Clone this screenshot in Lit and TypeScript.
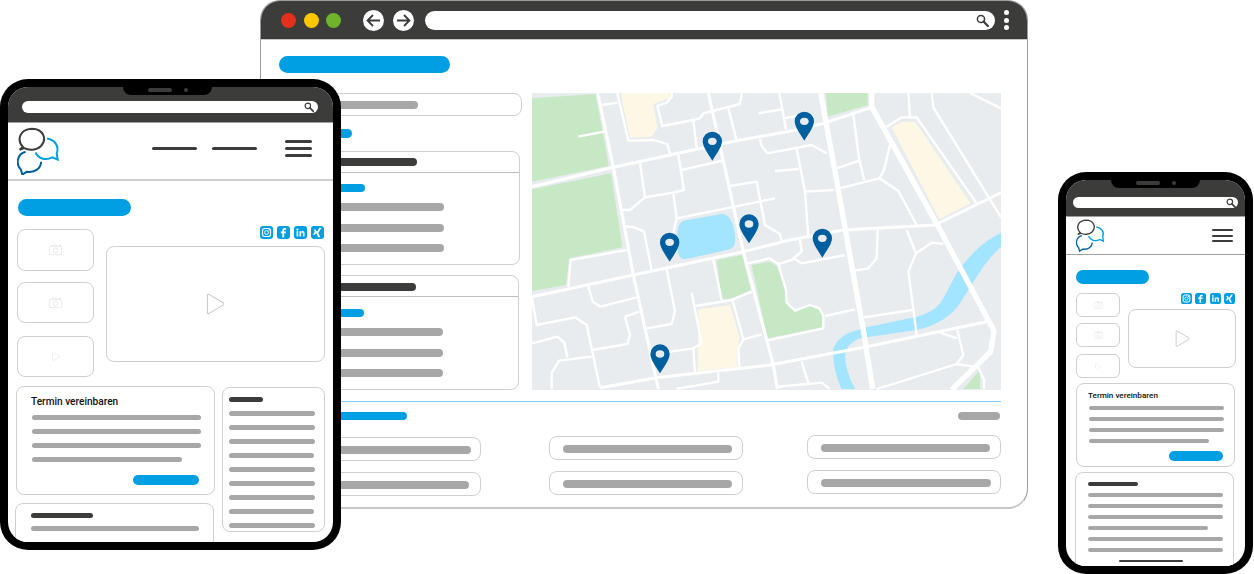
import { LitElement, css, html, svg, type TemplateResult } from "lit";
import { customElement } from "lit/decorators.js";
import { styleMap } from "lit/directives/style-map.js";

// Map geometry is in 3x units, the viewBox scales it back down
const GREEN = [
  "M6 25L197 12L237 228L6 275Z",
  "M6 298L243 250L277 472L118 505L108 585L6 603Z",
  "M888 9L1013 9L1013 45L893 80Z",
  "M560 510L637 495L662 600L605 625L575 628Z",
  "M665 525L720 515L742 530L765 600L768 640L795 665L840 645L868 655L878 675L878 712L712 745Z",
  "M1350 840L1300 897L1350 897Z",
];
const YELLOW = [
  "M272 9L420 9L418 25L370 42L382 115L365 140L300 143Z",
  "M1085 112L1115 95L1155 95L1322 340L1228 388Z",
  "M505 658L600 645L630 745L622 775L622 832L503 843Z",
];
const WATER = [
  "M460 392L575 372Q595 372 605 395Q618 425 615 462Q610 475 590 480L465 508Q445 505 443 480L442 425Q445 400 460 392Z",
  "M1413 428L1375 450Q1320 490 1280 550L1240 625Q1220 665 1160 680L1010 712L985 720Q930 730 910 775Q905 830 935 897L975 897Q945 840 945 795Q950 760 990 745L1010 742L1160 720Q1250 700 1290 640L1340 560Q1370 510 1413 470Z",
];
const ROADS_MAJOR = [
  "M872 9L925 300L962 510L1000 720L1028 897",
  "M1025 9L1025 50L1225 410L1392 722L1382 785L1265 900",
];
const ROADS_MID = [
  "M6 290L250 232L500 178L620 152L800 120L880 100L1025 52",
  "M203 9L250 232L310 555L385 897",
  "M535 9L640 485L730 825L742 897",
  "M6 620L310 555L640 485L780 450L940 420L1215 405L1413 308",
  "M210 893L390 862L720 825L1010 770L1370 695",
];
const ROADS_MINOR = [
  "M215 45L262 38",
  "M262 9L295 152L370 150L412 162L420 190",
  "M425 9L425 20L410 38L382 48L397 108L490 90L510 85L520 70L630 42L635 9",
  "M490 90L500 175",
  "M595 55L620 152",
  "M685 70L755 58",
  "M748 9L768 118",
  "M762 85L800 78",
  "M690 148L695 168L712 190L845 165L890 190",
  "M800 178L825 305L835 440",
  "M735 243L805 237",
  "M145 140L222 125",
  "M330 220L345 322L300 360L275 360",
  "M345 322L430 308L462 300L445 195",
  "M455 240L578 212",
  "M430 310L440 385L428 435",
  "M442 385L735 325",
  "M600 288L680 275L705 405L750 432L755 452",
  "M970 75L988 212L1003 270",
  "M920 235L988 212",
  "M825 305L912 300",
  "M928 295L1048 265L1062 240L1080 165",
  "M1048 265L1105 303L1160 405",
  "M1135 9L1140 80",
  "M1070 110L1115 82L1160 82L1340 340",
  "M1205 9L1210 52L1413 382",
  "M1320 9L1413 55",
  "M1130 420L1158 490L1205 458L1240 462",
  "M1158 490L1135 545L1160 735",
  "M1043 420L1040 505L1015 535L975 542",
  "M810 450L815 485L790 505L815 520L945 495",
  "M655 520L718 505L745 522L790 508",
  "M745 522L768 600L770 638L795 662L840 645L868 655L880 678L880 715L712 752",
  "M885 678L975 658",
  "M1000 682L1148 660",
  "M285 408L312 412L342 425L365 540",
  "M290 480L122 510L115 590",
  "M175 590L188 635L212 650L320 622",
  "M6 625L20 705L135 682L170 705L210 893",
  "M285 680L328 665",
  "M285 680L300 735L292 762L188 780",
  "M350 715L425 702L435 665L410 538",
  "M485 608L515 760L490 775L495 850",
  "M497 648L605 630L665 605",
  "M550 510L575 630",
  "M608 632L640 748L695 733",
  "M640 748L625 775L628 832",
  "M420 785L490 775",
  "M6 760L82 740L103 758L112 802",
  "M65 897L65 848L88 812L185 800",
  "M565 850L565 875L440 897",
  "M815 815L835 880",
  "M745 890L875 878L900 897",
  "M1040 897L1280 822L1300 795L1282 720",
  "M1230 728L1282 745",
  "M1280 822L1345 832L1362 870L1362 897",
];
const PINS = [
  [823, 152],
  [547, 212],
  [657, 460],
  [877, 503],
  [419, 515],
  [390, 850],
];

const shared = css`
  :host,
  * {
    box-sizing: border-box;
  }
  .bar {
    display: block;
    border-radius: 99px;
    flex: none;
  }
  .gray {
    background: #a7a7a7;
  }
  .dark {
    background: #3c3c3b;
  }
  .blue {
    background: #009fe3;
  }
  .box {
    border: 1px solid #cfcfcf;
    background: #fff;
  }
  .url {
    display: flex;
    align-items: center;
    justify-content: flex-end;
    background: #fff;
    border-radius: 99px;
  }
  .notch {
    position: absolute;
    top: 0;
    width: 89px;
    height: 8px;
    display: flex;
    justify-content: center;
    align-items: center;
    gap: 12px;
    background: #000;
    border-radius: 0 0 8px 8px;
    padding-bottom: 2px;
  }
  .speaker {
    width: 24px;
    height: 4px;
    border-radius: 2px;
    background: #3c3c3b;
  }
  .cam {
    width: 4px;
    height: 4px;
    border-radius: 50%;
    background: #3c3c3b;
  }
  .socials {
    display: flex;
    justify-content: flex-end;
  }
  .burger {
    display: flex;
    flex-direction: column;
  }
  .burger i {
    display: block;
    border-radius: 2px;
    background: #3c3c3b;
  }
  .stack {
    display: flex;
    flex-direction: column;
  }
  .thumb,
  .video {
    display: flex;
    align-items: center;
    justify-content: center;
  }
  h4 {
    margin: 0;
    font-family: Roboto, "Liberation Sans", sans-serif;
    font-weight: 500;
    color: #111;
    white-space: nowrap;
  }
  svg {
    display: block;
    flex: none;
  }
`;

function bar(kind: string, width: number, height: number): TemplateResult {
  return html`<span
    class="bar ${kind}"
    style=${styleMap({ width: `${width}px`, height: `${height}px` })}
  ></span>`;
}

function searchIcon(size: number): TemplateResult {
  return html`<svg width=${size} height=${size} viewBox="0 0 12 12" fill="none" stroke="#3c3c3b">
    <circle cx="4.600" cy="4.600" r="3.300" stroke-width="1.400" />
    <path d="M7 7L11 11" stroke-width="2" stroke-linecap="round" />
  </svg>`;
}

function logo(width: number): TemplateResult {
  return html`<svg width=${width} viewBox="50 153 130 148" fill="none" stroke-width="6">
    <path
      d="M141 188C165 192 178 212 170 232L173 252L157 245C135 256 115 248 106 230"
      stroke="#009fe3"
    />
    <path
      d="M76 228C50 235 45 265 62 282L66 297L80 288C105 292 122 278 123 258"
      stroke="#005f9e"
    />
    <path
      d="M68 213C50 195 55 160 95 158C130 158 142 190 122 211C108 224 85 224 72 217L58 222Z"
      stroke="#3c3c3b"
    />
  </svg>`;
}

function camera(width: number): TemplateResult {
  return html`<svg width=${width} viewBox="0 0 14 12" fill="none" stroke="#e2e2e2" stroke-width="0.800">
    <rect x="0.500" y="2.500" width="13" height="9" rx="1.500" />
    <path d="M3 2.500V1.200H8V2.500" />
    <circle cx="7" cy="7" r="2.600" />
    <circle cx="11.500" cy="1.800" r="1" fill="#e2e2e2" stroke="none" />
  </svg>`;
}

function play(width: number, color: string, sw: number): TemplateResult {
  return html`<svg
    width=${width}
    viewBox="0 0 20 23"
    fill="none"
    stroke=${color}
    stroke-width=${sw}
    stroke-linejoin="round"
  >
    <path d="M1.500 2.500Q1.500 0.800 3.200 1.500L18 10.200Q19.500 11.500 18 12.800L3.200 21.500Q1.500 22.200 1.500 20.500Z" />
  </svg>`;
}

function socialIcon(glyph: TemplateResult, size: number): TemplateResult {
  return html`<svg width=${size} height=${size} viewBox="0 0 13 13">
    <rect width="13" height="13" rx="3" fill="#009fe3" />
    ${glyph}
  </svg>`;
}

const SOCIAL_GLYPHS = [
  svg`<g fill="none" stroke="#fff"><rect x="2.500" y="2.500" width="8" height="8" rx="2.200" stroke-width="1.200"/><circle cx="6.500" cy="6.500" r="1.900" stroke-width="1"/></g><circle cx="9" cy="4" r=".7" fill="#fff"/>`,
  svg`<path fill="#fff" d="M7.200 11.500V7.200h1.600l.2-1.800H7.200V4.500c0-.5.200-.8.800-.8h1.100V2.200C8.800 2.100 8.200 2 7.700 2 6.300 2 5.300 2.900 5.300 4.300v1.100H3.800v1.800h1.500v4.300z"/>`,
  svg`<g fill="#fff"><rect x="2.600" y="5.200" width="1.600" height="5.200"/><circle cx="3.400" cy="3.500" r="1"/><path d="M5.500 5.200h1.500v.7c.3-.5.900-.8 1.600-.8 1.400 0 1.900.9 1.900 2.200v3.100H8.900V7.600c0-.6-.2-1.100-.8-1.100s-1 .5-1 1.100v2.800H5.500z"/></g>`,
  svg`<path fill="#fff" d="M2.600 3.600h2l1.300 2.200L4 8.700H2l1.900-2.900zM8.500 1.800h2L7.300 7l2.100 4.200H7.300L5.200 7z"/>`,
];

function socials(size: number, gap: number): TemplateResult {
  return html`<div class="socials" style=${styleMap({ gap: `${gap}px` })}>
    ${SOCIAL_GLYPHS.map((g) => socialIcon(html`${g}`, size))}
  </div>`;
}

function mapView(): TemplateResult {
  const paths = (list: string[], cls: string) => list.map((d) => svg`<path class=${cls} d=${d} />`);
  return html`<svg class="map" width="469" height="297" viewBox="6 9 1407 891">
    <rect x="6" y="9" width="1407" height="891" fill="#e9ecef" />
    ${paths(GREEN, "green")} ${paths(YELLOW, "yellow")} ${paths(WATER, "water")}
    ${paths(ROADS_MINOR, "minor")} ${paths(ROADS_MID, "mid")} ${paths(ROADS_MAJOR, "major")}
    ${PINS.map(
      ([x, y]) => svg`<g transform="translate(${x} ${y})">
        <path class="pin" d="M0 0C-8 -14 -29 -40 -29 -58A29 29 0 0 1 29 -58C29 -40 8 -14 0 0Z" />
        <ellipse cx="0" cy="-58" rx="13" ry="11" fill="#e9ecef" />
      </g>`,
    )}
  </svg>`;
}

@customElement("browser-mock")
export class BrowserMock extends LitElement {
  private filterCard(dark: number, blue: number, gray: number, cls: string): TemplateResult {
    return html`<div class="box filter ${cls}">
      <div class="filter-head">${bar("dark", dark, 8)}</div>
      <div class="stack filter-body">
        ${bar("blue", blue, 8)} ${bar("gray", gray, 8)} ${bar("gray", gray, 8)}
        ${bar("gray", gray, 8)}
      </div>
    </div>`;
  }

  private pill(barWidth: number): TemplateResult {
    return html`<div class="box pill">${bar("gray", barWidth, 8)}</div>`;
  }

  override render(): TemplateResult {
    return html`
      <div class="chrome">
        <span class="dot" style="background:#e3301a"></span>
        <span class="dot" style="background:#fdc800"></span>
        <span class="dot" style="background:#6fb52c"></span>
        <span class="nav first">
          <svg width="15" height="13" viewBox="0 0 15 13" fill="none" stroke="#3c3c3b" stroke-width="1.800">
            <path d="M14 6.500H2M7 1L1.500 6.500L7 12" />
          </svg>
        </span>
        <span class="nav">
          <svg width="15" height="13" viewBox="0 0 15 13" fill="none" stroke="#3c3c3b" stroke-width="1.800">
            <path d="M1 6.500H13M8 1L13.500 6.500L8 12" />
          </svg>
        </span>
        <div class="url browser-url">${searchIcon(13)}</div>
        <div class="stack more"><i></i><i></i><i></i></div>
      </div>
      <div class="page">
        ${bar("blue", 171, 17)}
        <div class="main">
          <div class="stack side">
            <div class="box search">${bar("gray", 124, 8)}</div>
            <div class="count">${bar("blue", 73, 9)}</div>
            ${this.filterCard(124, 72, 151, "f1")} ${this.filterCard(123, 71, 150, "f2")}
          </div>
          ${mapView()}
        </div>
        <div class="rule"></div>
        <div class="list-head">${bar("blue", 128, 8)} ${bar("gray", 42, 8)}</div>
        <div class="pills">
          <div class="stack col c1">${this.pill(170)} ${this.pill(168)}</div>
          <div class="stack col c2">${this.pill(169)} ${this.pill(169)}</div>
          <div class="stack col c3">${this.pill(169)} ${this.pill(170)}</div>
        </div>
      </div>
    `;
  }

  static styles = [
    shared,
    css`
      :host {
        position: absolute;
        left: 260px;
        top: 0;
        width: 768px;
        height: 509px;
        background: #fff;
        border: 1px solid #9c9c9c;
        border-bottom: 2px solid #c8c8c8;
        border-radius: 20px;
        overflow: hidden;
      }
      .chrome {
        height: 39px;
        background: #3c3c3b;
        display: flex;
        align-items: center;
        padding-left: 20px;
        border-bottom: 1px solid #c8c8c8;
      }
      .dot {
        width: 15px;
        height: 15px;
        border-radius: 50%;
        margin-right: 7.500px;
      }
      .nav {
        width: 21px;
        height: 21px;
        border-radius: 50%;
        background: #fff;
        display: flex;
        align-items: center;
        justify-content: center;
        margin-right: 9px;
      }
      .nav.first {
        margin-left: 14px;
      }
      .browser-url {
        width: 570px;
        height: 19px;
        margin-left: 2px;
        padding-right: 6px;
      }
      .more {
        gap: 2.500px;
        margin-left: 9px;
      }
      .more i {
        width: 5px;
        height: 5px;
        border-radius: 50%;
        background: #fff;
      }
      .page {
        padding: 16px 26px 0 18px;
      }
      .main {
        display: flex;
        margin-top: 20px;
        gap: 10px;
        align-items: flex-start;
      }
      .side {
        width: 243px;
      }
      .search {
        height: 23px;
        border-radius: 8px;
        padding: 7px 14px;
      }
      .count {
        padding: 13px 0 13px 0;
      }
      .filter {
        border-radius: 8px;
        width: 241px;
        height: 114px;
      }
      .f2 {
        margin-top: 10px;
        width: 240px;
        height: 115px;
      }
      .filter-head {
        height: 21px;
        padding: 6px 0 0 13px;
        border-bottom: 1px solid #bdbdbd;
      }
      .f2 .filter-head {
        padding-top: 7px;
      }
      .filter-body {
        padding: 11px 0 0 13px;
        gap: 12.300px;
      }
      .f2 .filter-body {
        padding-top: 12px;
      }
      .filter-body .blue {
        margin-bottom: -1px;
      }
      .map .green {
        fill: #c6e8c5;
      }
      .map .yellow {
        fill: #fdf7e6;
      }
      .map .water {
        fill: #a3e4ff;
      }
      .map path.minor,
      .map path.mid,
      .map path.major {
        fill: none;
        stroke: #fff;
        stroke-linejoin: round;
      }
      .map .minor {
        stroke-width: 7;
      }
      .map .mid {
        stroke-width: 9;
      }
      .map .major {
        stroke-width: 16;
      }
      .map .pin {
        fill: #005f9e;
      }
      .rule {
        height: 1px;
        margin-top: 11px;
        width: 722px;
        background: #78d3f8;
      }
      .list-head {
        display: flex;
        justify-content: space-between;
        width: 721px;
        margin-top: 10px;
      }
      .pills {
        display: flex;
        justify-content: space-between;
        padding-left: 8px;
        width: 722px;
      }
      .col {
        width: 194px;
        gap: 11px;
      }
      .c1 {
        margin-top: 17px;
      }
      .c2 {
        margin-top: 16px;
        margin-left: 4px;
      }
      .c3 {
        margin-top: 15px;
      }
      .pill {
        height: 24px;
        border-radius: 8px;
        padding: 8px 0 0 13px;
      }
    `,
  ];
}

@customElement("tablet-mock")
export class TabletMock extends LitElement {
  override render(): TemplateResult {
    return html`
      <div class="screen">
        <div class="chrome"><div class="url turl">${searchIcon(10)}</div></div>
        <span class="notch"><span class="speaker"></span><span class="cam"></span></span>
        <header>
          ${logo(43)}
          <span class="spacer"></span>
          <span class="navitem">${bar("dark", 45, 3)}</span>
          <span class="navgap"></span>
          <span class="navitem">${bar("dark", 45, 3)}</span>
          <div class="burger"><i></i><i></i><i></i></div>
        </header>
        <div class="body">
          ${bar("blue", 113, 17)}
          <div class="media">
            <div class="stack thumbs">
              <div class="box thumb">${camera(13)}</div>
              <div class="box thumb t2">${camera(13)}</div>
              <div class="box thumb t3">${play(8, "#e2e2e2", 1.400)}</div>
            </div>
            <div class="stack player">
              ${socials(13, 4)}
              <div class="box video">${play(19, "#c8c8c8", 1.100)}</div>
            </div>
          </div>
          <div class="lower">
            <div class="stack">
              <div class="box card termin">
                <h4>Termin vereinbaren</h4>
                <div class="stack lines">
                  ${bar("gray", 169, 5)} ${bar("gray", 169, 5)} ${bar("gray", 169, 5)}
                  ${bar("gray", 150, 5)}
                </div>
                <div class="cta">${bar("blue", 66, 10)}</div>
              </div>
              <div class="box card second">
                ${bar("dark", 62, 5)}
                <div class="stack lines l2">${bar("gray", 168, 5)}</div>
              </div>
            </div>
            <div class="box card links">
              ${bar("dark", 34, 5)}
              <div class="stack lines l3">
                ${[86, 86, 86, 85, 86, 86, 86, 85, 86].map((w) => bar("gray", w, 5))}
              </div>
            </div>
          </div>
        </div>
      </div>
    `;
  }

  static styles = [
    shared,
    css`
      :host {
        position: absolute;
        left: 0;
        top: 79px;
        width: 341px;
        height: 471px;
        background: #000;
        border-radius: 28px;
        padding: 8px;
      }
      .screen {
        position: relative;
        width: 325px;
        height: 455px;
        background: #fff;
        border-radius: 20px;
        overflow: hidden;
      }
      .chrome {
        height: 36px;
        background: #3c3c3b;
        padding: 14px 15px 0 14px;
        border-bottom: 1px solid #a0a0a0;
      }
      .turl {
        height: 12px;
        padding-right: 4px;
      }
      .notch {
        left: 115px;
      }
      header {
        height: 58px;
        display: flex;
        align-items: center;
        padding: 0 21px 0 9px;
        border-bottom: 2px solid #cfcfcf;
      }
      .spacer {
        flex: 1;
      }
      .navitem {
        margin-bottom: 5px;
      }
      .navgap {
        width: 15px;
      }
      .burger {
        width: 27px;
        gap: 4px;
        margin: 0 0 5px 28px;
      }
      .burger i {
        height: 3px;
      }
      .body {
        padding: 18px 0 0 10px;
      }
      .media {
        display: flex;
        margin: 10px 0 0 -1px;
        gap: 12px;
      }
      .thumbs {
        padding-top: 3px;
        width: 77px;
      }
      .thumb {
        height: 42px;
        border-radius: 8px;
      }
      .t2 {
        margin-top: 11px;
        height: 41px;
      }
      .t3 {
        margin-top: 13px;
        height: 41px;
      }
      .player {
        width: 219px;
      }
      .socials {
        padding-right: 1px;
      }
      .video {
        margin-top: 7px;
        height: 116px;
        border-radius: 8px;
      }
      .lower {
        display: flex;
        gap: 7px;
        margin: 9px 0 0 -2px;
        align-items: flex-start;
      }
      .card {
        border-radius: 8px;
      }
      .termin {
        width: 199px;
        height: 109px;
        padding: 8px 0 0 14px;
      }
      h4 {
        font-size: 10.100px;
        line-height: 13px;
      }
      .lines {
        gap: 9px;
        margin-top: 7px;
        margin-left: 1px;
      }
      .cta {
        margin: 13px 0 0 102px;
      }
      .second {
        width: 199px;
        height: 60px;
        margin: 8px 0 0 -1px;
        padding: 9px 0 0 15px;
      }
      .second .l2 {
        margin-top: 8px;
        margin-left: 0;
      }
      .links {
        width: 103px;
        height: 145px;
        margin-top: 1px;
        padding: 9px 0 0 6px;
      }
      .links .l3 {
        margin-top: 9px;
        margin-left: 0;
      }
    `,
  ];
}

@customElement("phone-mock")
export class PhoneMock extends LitElement {
  override render(): TemplateResult {
    return html`
      <div class="screen">
        <div class="chrome"><div class="url purl">${searchIcon(10)}</div></div>
        <span class="notch"><span class="speaker"></span><span class="cam"></span></span>
        <header>
          ${logo(29)}
          <div class="burger"><i></i><i></i><i></i></div>
        </header>
        <div class="body">
          ${bar("blue", 73, 14)}
          <div class="media">
            <div class="stack thumbs">
              <div class="box thumb">${camera(9)}</div>
              <div class="box thumb">${camera(9)}</div>
              <div class="box thumb">${play(6, "#e2e2e2", 1.400)}</div>
            </div>
            <div class="stack player">
              ${socials(11, 3.300)}
              <div class="box video">${play(15, "#c8c8c8", 1.200)}</div>
            </div>
          </div>
          <div class="box card termin">
            <h4>Termin vereinbaren</h4>
            <div class="stack lines">
              ${bar("gray", 135, 4)} ${bar("gray", 135, 4)} ${bar("gray", 135, 4)}
              ${bar("gray", 120, 4)}
            </div>
            <div class="cta">${bar("blue", 54, 10)}</div>
          </div>
          <div class="box card second">
            ${bar("dark", 50, 4)}
            <div class="stack lines l2">
              ${[135, 135, 135, 120, 135, 135].map((w) => bar("gray", w, 4))}
            </div>
          </div>
        </div>
        <span class="home"></span>
      </div>
    `;
  }

  static styles = [
    shared,
    css`
      :host {
        position: absolute;
        left: 1058px;
        top: 172px;
        width: 195px;
        height: 402px;
        background: #000;
        border-radius: 28px;
        padding: 8px;
      }
      .screen {
        position: relative;
        width: 179px;
        height: 386px;
        background: #fff;
        border-radius: 20px;
        overflow: hidden;
      }
      .chrome {
        height: 37px;
        background: #3c3c3b;
        padding: 17px 7px 0 7px;
        border-bottom: 1px solid #a0a0a0;
      }
      .purl {
        height: 11px;
        padding-right: 2px;
      }
      .notch {
        left: 45px;
      }
      header {
        height: 38px;
        display: flex;
        align-items: center;
        justify-content: space-between;
        padding: 0 12px 0 10px;
        border-bottom: 1px solid #a0a0a0;
      }
      .burger {
        width: 21px;
        gap: 3.500px;
      }
      .burger i {
        height: 2px;
      }
      .body {
        padding: 15px 0 0 10px;
      }
      .media {
        display: flex;
        margin-top: 9px;
        gap: 8px;
      }
      .thumbs {
        width: 44px;
        gap: 6px;
      }
      .thumb {
        height: 24px;
        border-radius: 6px;
      }
      .thumb:last-child {
        margin-top: 1px;
      }
      .player {
        width: 108px;
      }
      .socials {
        padding-right: 1px;
      }
      .video {
        margin-top: 5px;
        height: 59px;
        border-radius: 8px;
      }
      .card {
        width: 159px;
        border-radius: 8px;
      }
      .termin {
        height: 84px;
        margin-top: 5px;
        padding: 6px 0 0 11px;
      }
      h4 {
        font-size: 8.100px;
        line-height: 11px;
      }
      .lines {
        gap: 7px;
        margin-top: 5px;
        margin-left: 1px;
      }
      .cta {
        margin: 8px 0 0 81px;
      }
      .second {
        margin: 5px 0 0 -1px;
        height: 110px;
        padding: 9px 0 0 12px;
      }
      .second .l2 {
        margin-top: 7px;
        margin-left: 0;
      }
      .home {
        position: absolute;
        left: 53px;
        bottom: 4px;
        width: 64px;
        height: 2px;
        background: #3c3c3b;
        border-radius: 1px;
      }
    `,
  ];
}

@customElement("app-root")
export class AppRoot extends LitElement {
  override render(): TemplateResult {
    return html`<browser-mock></browser-mock><tablet-mock></tablet-mock><phone-mock></phone-mock>`;
  }

  static styles = css`
    :host {
      display: block;
      position: relative;
      width: 1254px;
      height: 574px;
      background: #fff;
      overflow: hidden;
    }
  `;
}

declare global {
  interface HTMLElementTagNameMap {
    "app-root": AppRoot;
    "browser-mock": BrowserMock;
    "tablet-mock": TabletMock;
    "phone-mock": PhoneMock;
  }
}
